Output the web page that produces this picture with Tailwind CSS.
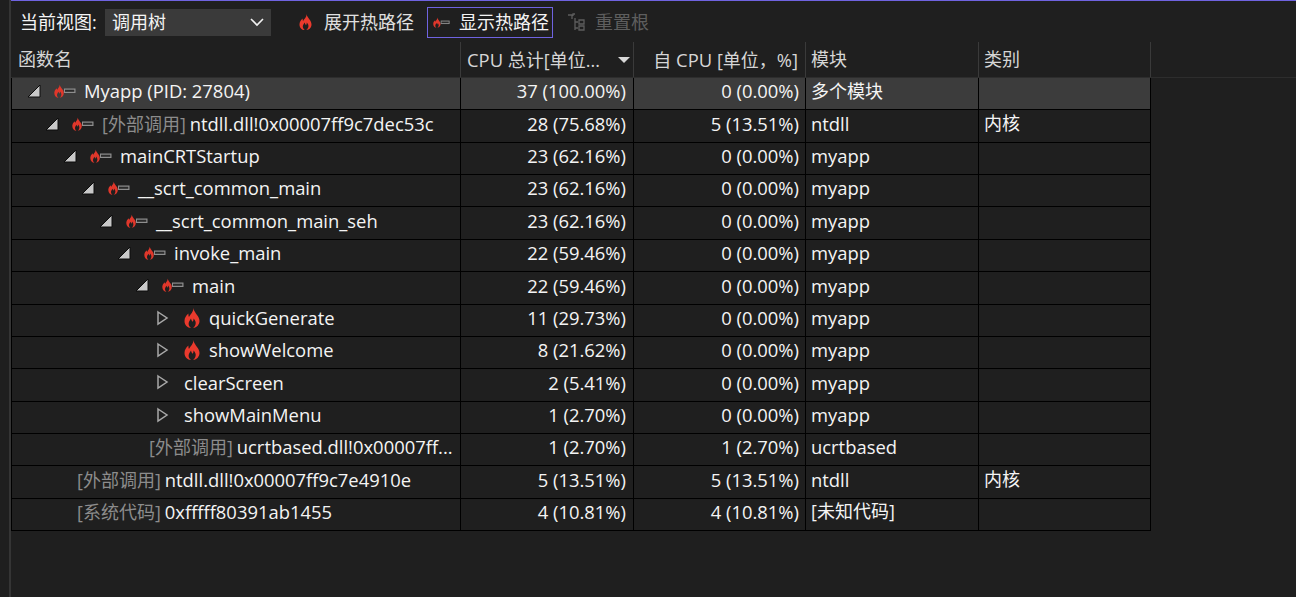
<!DOCTYPE html>
<html lang="zh-CN">
  <head>
    <meta charset="UTF-8" />
    <script src="https://cdn.jsdelivr.net/npm/@tailwindcss/browser@4"></script>
    <title>CPU 调用树</title>
  </head>
  <body class="h-[597px] w-[1296px] overflow-hidden bg-[#1f1f1f] text-[18.4px] text-[#f4f4f4] font-['Open_Sans','Noto_Sans_CJK_SC',sans-serif]">
    <svg width="0" height="0" class="absolute">
      <defs>
        <symbol id="flame" viewBox="0 0 16 20">
          <path fill="#ea3a2d" d="M9 0C10 4 6 6 5 9 4.500 8 4.300 7 4.500 5.500 2 7.500 0.500 10 0.500 13 0.500 17 3.500 20 7 20 5 18.500 4.200 16.500 4.800 14.500 5.200 13 6.200 12 7 10.500 7.200 12 8 13 8.800 13.800 9.300 12.800 9.600 11.800 9.600 10.500 11.500 12.500 12 14.500 11.600 16 11.300 17.800 10.300 19 9 20 13 19.500 15.500 16.500 15.500 13 15.500 8 11 6 9 0z"/>
        </symbol>
        <symbol id="hotpath" viewBox="0 0 22 14">
          <path fill="#e0372b" d="M5.500 0.500C6 3 3.800 4 3.200 6 2.900 5.500 2.800 5 2.900 4.200 1.300 5.400 0.300 7 0.300 9 0.300 11.800 2.300 13.800 4.500 13.800 3.200 12.800 2.800 11.500 3.100 10.200 3.300 9.300 4 8.600 4.500 7.700 4.700 8.500 5.100 9.200 5.600 9.700 5.900 9 6 8.300 6 7.500 7.200 8.800 7.600 10.200 7.300 11.300 7.100 12.400 6.500 13.200 5.700 13.800 8.200 13.500 9.800 11.500 9.800 9 9.800 5.600 6.800 4.500 5.500 0.500z"/>
          <path fill="#8e8e8e" d="M10 4.500h11.500v4.500H10z"/>
          <path fill="#2b2b2b" d="M11 5.700h9.300v2.100H11z"/>
        </symbol>
      </defs>
    </svg>

    <div class="flex h-full">
      <!-- left strip -->
      <div class="w-[9px] shrink-0 bg-[#1f1f1f]"></div>
      <div class="w-[2px] shrink-0 bg-[#353535]"></div>

      <div class="flex-1 min-w-0">
        <div class="h-px bg-[#6f63e0]"></div>

        <!-- toolbar -->
        <div class="flex h-[41px] items-center pl-[9px] pt-[1px] text-[18px]">
          <span class="w-[77px] whitespace-nowrap">当前视图:</span>
          <div class="ml-[8px] flex h-[27px] w-[166px] items-center justify-between bg-[#3a3a3a] pl-[7px] pr-[6px]">
            <span>调用树</span>
            <svg width="16" height="16" viewBox="0 0 16 16" fill="none" stroke="#f1f1f1" stroke-width="1.600"><path d="M2 5l6 6 6-6"/></svg>
          </div>
          <svg class="ml-[28px]" width="13" height="16"><use href="#flame"/></svg>
          <span class="ml-[12px] text-[#e0e0e0]">展开热路径</span>
          <div class="ml-[13px] flex h-[31px] w-[126px] items-center border border-[#6f63e0] pl-[5px]">
            <svg width="17" height="11"><use href="#hotpath"/></svg>
            <span class="ml-[9px]">显示热路径</span>
          </div>
          <svg class="ml-[14px]" width="18" height="18" viewBox="0 0 18 18" fill="none" stroke="#5e5e5e" stroke-width="1.300"><path d="M1 2h4v4M8 1h-2v2M8 5v12M8 9h3M8 15h3M12 7h5v4h-5zM12 13h5v4h-5z"/></svg>
          <span class="ml-[10px] text-[#5e5e5e]">重置根</span>
        </div>

        <!-- table header -->
        <div class="flex h-[36px] items-center border-b border-[#2d2d2d] text-[#d6d6d6]">
          <div class="flex h-full w-[450px] items-center border-r border-[#3a3a3a] pl-[7px] text-[18px]">函数名</div>
          <div class="flex h-full w-[173px] items-center justify-between border-r border-[#3a3a3a] pl-[6px] pr-[3px]">
            <span>CPU <span class="text-[18px]">总计[单位...</span></span>
            <svg width="12" height="6" viewBox="0 0 12 6"><path fill="#d8d8d8" d="M0 0h12L6 6z"/></svg>
          </div>
          <div class="flex h-full w-[172px] items-center justify-end border-r border-[#3a3a3a] pr-[7px]"><span><span class="text-[18px]">自</span> CPU <span class="text-[18px]">[单位，</span>%]</span></div>
          <div class="flex h-full w-[173px] items-center border-r border-[#3a3a3a] pl-[5px] text-[18px]">模块</div>
          <div class="flex h-full w-[172px] items-center border-r border-[#3a3a3a] pl-[5px] text-[18px]">类别</div>
        </div>

        <!-- rows, filled in by the script below -->
        <div class="w-[1140px]" id="rows"></div>
      </div>
    </div>

    <script>
      const DOWN = '<svg class="shrink-0" width="14" height="14" viewBox="0 0 14 14"><path fill="#c8c8c8" stroke="#0c0c0c" d="M13 1v12H1z"/></svg><svg class="ml-[13px] shrink-0" width="22" height="14"><use href="#hotpath"/></svg>'
      const RIGHT = '<svg class="shrink-0" width="14" height="16" viewBox="0 0 14 16" fill="none" stroke="#a8a8a8" stroke-width="1.500"><path d="M2 2l9 6-9 6z"/></svg>'
      const FLAME = '<svg class="ml-[14px] shrink-0" width="16" height="20"><use href="#flame"/></svg>'
      const tag = (t) => '<span class="mr-[4px] text-[18px] text-[#8c8c8c]">' + t + '</span>'

      // indent, icons, label margin, label, total, self, module, category
      const data = [
        [15, DOWN, 'ml-[8px]', 'Myapp (PID: 27804)', '37 (100.00%)', '0 (0.00%)', '<span class="text-[18px]">多个模块</span>', ''],
        [33, DOWN, 'ml-[8px]', tag('[外部调用]') + 'ntdll.dll!0x00007ff9c7dec53c', '28 (75.68%)', '5 (13.51%)', 'ntdll', '内核'],
        [51, DOWN, 'ml-[8px]', 'mainCRTStartup', '23 (62.16%)', '0 (0.00%)', 'myapp', ''],
        [69, DOWN, 'ml-[8px]', '__scrt_common_main', '23 (62.16%)', '0 (0.00%)', 'myapp', ''],
        [87, DOWN, 'ml-[8px]', '__scrt_common_main_seh', '23 (62.16%)', '0 (0.00%)', 'myapp', ''],
        [105, DOWN, 'ml-[8px]', 'invoke_main', '22 (59.46%)', '0 (0.00%)', 'myapp', ''],
        [123, DOWN, 'ml-[8px]', 'main', '22 (59.46%)', '0 (0.00%)', 'myapp', ''],
        [144, RIGHT + FLAME, 'ml-[9px]', 'quickGenerate', '11 (29.73%)', '0 (0.00%)', 'myapp', ''],
        [144, RIGHT + FLAME, 'ml-[9px]', 'showWelcome', '8 (21.62%)', '0 (0.00%)', 'myapp', ''],
        [144, RIGHT, 'ml-[14px]', 'clearScreen', '2 (5.41%)', '0 (0.00%)', 'myapp', ''],
        [144, RIGHT, 'ml-[14px]', 'showMainMenu', '1 (2.70%)', '0 (0.00%)', 'myapp', ''],
        [137, '', '', tag('[外部调用]') + 'ucrtbased.dll!0x00007ff...', '1 (2.70%)', '1 (2.70%)', 'ucrtbased', ''],
        [65, '', '', tag('[外部调用]') + 'ntdll.dll!0x00007ff9c7e4910e', '5 (13.51%)', '5 (13.51%)', 'ntdll', '内核'],
        [65, '', '', tag('[系统代码]') + '0xfffff80391ab1455', '4 (10.81%)', '4 (10.81%)', '<span class="text-[18px]">[未知代码]</span>', ''],
      ]

      const cell = 'flex h-full items-center border-r border-black pb-[5px] '
      document.querySelector('#rows').innerHTML = data.map((r, i) =>
        '<div class="flex h-[32.36px] border-b border-l border-black ' + (i == 0 ? 'bg-[#3c3c3c]' : '') + '">' +
          '<div class="' + cell + 'w-[449px] whitespace-nowrap" style="padding-left:' + r[0] + 'px">' + r[1] + '<span class="' + r[2] + '">' + r[3] + '</span></div>' +
          '<div class="' + cell + 'w-[173px] justify-end pr-[7px]">' + r[4] + '</div>' +
          '<div class="' + cell + 'w-[172px] justify-end pr-[6px]">' + r[5] + '</div>' +
          '<div class="' + cell + 'w-[173px] pl-[5px]">' + r[6] + '</div>' +
          '<div class="' + cell + 'w-[172px] pl-[5px] text-[18px]">' + r[7] + '</div>' +
        '</div>'
      ).join('')
    </script>
  </body>
</html>
